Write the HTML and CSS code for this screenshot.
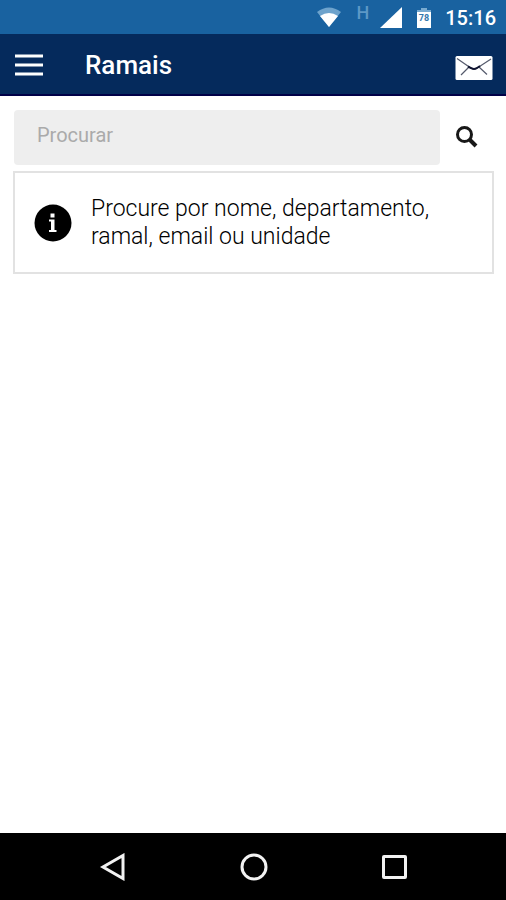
FILE: index.html
```html
<!DOCTYPE html>
<html lang="pt-BR">
<head>
<meta charset="utf-8">
<meta name="viewport" content="width=device-width, initial-scale=1">
<title>Ramais</title>
<link rel="stylesheet" href="styles.css">
</head>
<body>
<div class="status">
  <svg class="wifi" width="26" height="22" viewBox="0 0 26 22" aria-hidden="true"><path d="M1 5Q13-4 25 5L13 20Z" fill="#6ea3cc"/><path d="M4 9Q13 3 22 9L13 20Z" fill="#fff"/></svg>
  <span class="network">H</span>
  <svg class="signal" width="22" height="22" viewBox="0 0 22 22" aria-hidden="true"><path d="M22 0V21H0Z" fill="#fff"/></svg>
  <svg class="battery" width="16" height="22" viewBox="0 0 16 22" aria-hidden="true"><path d="M5 1h6v2h4v4H1V3h4Z" fill="#79abd0"/><path d="M1 5h14v16H1Z" fill="#fff"/><text class="charge" x="8" y="14" text-anchor="middle">78</text></svg>
  <time class="clock">15:16</time>
</div>
<header class="header">
  <button class="icon-button" type="button" aria-label="Menu"><svg width="28" height="22" viewBox="0 0 28 22"><path d="M0 2h28M0 11h28M0 20h28" stroke="#fff" stroke-width="3"/></svg></button>
  <h1 class="title">Ramais</h1>
  <button class="icon-button" type="button" aria-label="Mensagens"><svg width="38" height="24" viewBox="0 0 38 24"><rect x="0.5" width="37" height="24" rx="1.5" fill="#fff"/><path d="M2 2.500L15 11.500Q19 14 23 11.500L36 3M14 11L6 19M24 11L32 18.500" fill="none" stroke="#555a6c" stroke-width="1.200"/><path d="M13 10.500L16 12Q19 14 22 12L25 10" fill="none" stroke="#101430" stroke-width="2"/></svg></button>
</header>
<main class="main">
  <form class="search" role="search">
    <input class="field" type="search" placeholder="Procurar" aria-label="Procurar">
    <button class="icon-button submit" type="button" aria-label="Buscar"><svg width="22" height="22" viewBox="0 0 22 22" fill="none" stroke="#181818"><circle cx="8.500" cy="8.500" r="7" stroke-width="3"/><path d="M13.500 13.500L20 20" stroke-width="4"/></svg></button>
  </form>
  <section class="notice">
    <svg class="info" width="38" height="38" viewBox="0 0 38 38" aria-hidden="true"><circle cx="19" cy="19" r="18.500" fill="#000"/><path d="M16.500 9.500h4v4h-4ZM15 15.500h5.500v10.500h2v2h-7.500v-2h2v-8.500h-2Z" fill="#fff"/></svg>
    <p class="message">Procure por nome, departamento, ramal, email ou unidade</p>
  </section>
</main>
<nav class="nav" aria-label="Sistema">
  <button class="icon-button" type="button" aria-label="Voltar"><svg width="28" height="28" viewBox="0 0 28 28"><path d="M24 2.500V25.500L4 14Z"/></svg></button>
  <button class="icon-button" type="button" aria-label="Início"><svg width="28" height="28" viewBox="0 0 28 28"><circle cx="14" cy="14" r="12"/></svg></button>
  <button class="icon-button" type="button" aria-label="Recentes"><svg width="28" height="28" viewBox="0 0 28 28"><rect x="3.500" y="3.500" width="22" height="21" rx="0.500"/></svg></button>
</nav>
</body>
</html>
```
FILE: styles.css
```css
* { box-sizing: border-box; }

body {
  display: flex;
  flex-direction: column;
  min-height: 100vh;
  margin: 0;
  background: #fff;
  color: #000;
  font-family: Roboto, "Liberation Sans", sans-serif;
}

svg { display: block; flex: none; }

.icon-button {
  padding: 0;
  border: 0;
  background: none;
}

.status {
  display: flex;
  align-items: center;
  justify-content: flex-end;
  height: 34px;
  padding: 2px 10px 0 0;
  background: #1962a0;
  color: #fff;
}

.network {
  margin: 0 11px 0 14px;
  padding-bottom: 10px;
  color: #5d98c6;
  font-size: 18px;
  font-weight: 500;
  line-height: 20px;
}

.battery { margin: 0 13px 0 14px; }

.charge {
  fill: #3478ad;
  font-size: 9px;
  font-weight: 700;
}

.clock {
  font-size: 20px;
  font-weight: 500;
  line-height: 24px;
}

.header {
  display: flex;
  align-items: center;
  height: 62px;
  padding: 2px 13px 0 15px;
  border-bottom: 2px solid #000047;
  background: #052a5c;
}

.title {
  flex: 1;
  margin: 0 0 0 42px;
  color: #fff;
  font-size: 26px;
  font-weight: 500;
  line-height: 32px;
}

.header .icon-button:last-child { padding-top: 6px; }

.main {
  flex: 1;
  padding: 14px 12px 0 13px;
}

.search {
  display: flex;
  align-items: center;
  margin-bottom: 6px;
}

.field {
  flex: 1;
  min-width: 0;
  height: 55px;
  margin-left: 1px;
  padding: 0 23px 6px;
  border: 0;
  border-radius: 4px;
  background: #eee;
  color: #222;
  font: 20px Roboto, "Liberation Sans", sans-serif;
}

.field::placeholder { color: #aaa; }

.submit { padding: 0 16px 2px; }

.notice {
  display: flex;
  align-items: center;
  gap: 19px;
  min-height: 103px;
  padding: 19px;
  border: 2px solid #e2e2e2;
}

.message {
  margin: 0;
  font-size: 23px;
  font-weight: 300;
  line-height: 28px;
}

.nav {
  display: flex;
  align-items: center;
  justify-content: space-between;
  height: 67px;
  padding: 0 98px 0 99px;
  background: #000;
}

.nav svg {
  fill: none;
  stroke: #f2f2f2;
  stroke-width: 3;
}
```
